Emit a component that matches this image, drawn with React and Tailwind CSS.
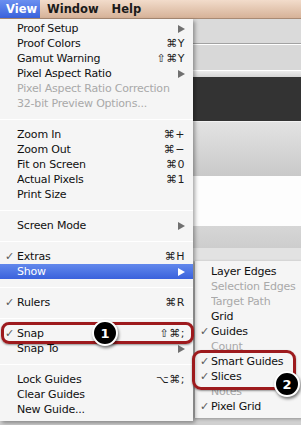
import React from 'react';

const viewItems = [
  { label: 'Proof Setup', arrow: true },
  { label: 'Proof Colors', keys: '⌘Y' },
  { label: 'Gamut Warning', keys: '⇧⌘Y' },
  { label: 'Pixel Aspect Ratio', arrow: true },
  { label: 'Pixel Aspect Ratio Correction', disabled: true },
  { label: '32-bit Preview Options...', disabled: true },
  'sep',
  { label: 'Zoom In', keys: '⌘+' },
  { label: 'Zoom Out', keys: '⌘−' },
  { label: 'Fit on Screen', keys: '⌘0' },
  { label: 'Actual Pixels', keys: '⌘1' },
  { label: 'Print Size' },
  'sep',
  { label: 'Screen Mode', arrow: true },
  'sep',
  { label: 'Extras', check: true, keys: '⌘H' },
  { label: 'Show', arrow: true, active: true },
  'sep',
  { label: 'Rulers', check: true, keys: '⌘R' },
  'sep',
  { label: 'Snap', check: true, keys: '⇧⌘;' },
  { label: 'Snap To', arrow: true },
  'sep',
  { label: 'Lock Guides', keys: '⌥⌘;' },
  { label: 'Clear Guides' },
  { label: 'New Guide...' },
];

const showItems = [
  { label: 'Layer Edges' },
  { label: 'Selection Edges', disabled: true },
  { label: 'Target Path', disabled: true },
  { label: 'Grid' },
  { label: 'Guides', check: true },
  { label: 'Count', disabled: true },
  { label: 'Smart Guides', check: true },
  { label: 'Slices', check: true },
  { label: 'Notes', disabled: true },
  { label: 'Pixel Grid', check: true },
];

const Arrow = ({ white }) => (
  <svg width="7" height="8" viewBox="0 0 7 8" className="shrink-0">
    <path d="M0 0 L7 4 L0 8 Z" fill={white ? '#ffffff' : '#707070'} />
  </svg>
);

const MenuRow = ({ item, checkW = 'w-[17px]' }) => {
  if (item === 'sep') {
    return (
      <div className="h-[16px] flex items-center">
        <div className="w-full h-px bg-[#dcdcdc] border-b border-white" />
      </div>
    );
  }
  const text = item.active
    ? 'text-white'
    : item.disabled
    ? 'text-[#a9a9a9]'
    : 'text-[#101010]';
  return (
    <div
      className={`h-[15px] flex items-center pr-[8px] ${
        item.active ? 'bg-gradient-to-b from-[#6288ec] to-[#3a61dc]' : ''
      }`}
    >
      <div className={`${checkW} shrink-0 pl-[5px] text-[11px] leading-none text-[#5a5a5a]`}>
        {item.check ? '✓' : ''}
      </div>
      <div className={`flex-1 whitespace-nowrap overflow-hidden tracking-[-0.2px] ${text}`}>
        {item.label}
      </div>
      {item.keys && <div className="text-[#1e1e1e] whitespace-nowrap tracking-[0.5px]">{item.keys}</div>}
      {item.arrow && <Arrow white={item.active} />}
    </div>
  );
};

export default function App() {
  return (
    <div
      className="relative w-[301px] h-[425px] overflow-hidden bg-[#d0d0d0] text-[11px] leading-[15px]"
      style={{ fontFamily: '"DejaVu Sans", "Liberation Sans", sans-serif' }}
    >
      {/* menu bar */}
      <div className="h-[19px] flex items-stretch bg-gradient-to-b from-[#f2dccb] to-[#d6b298] border-b border-[#a88a74] font-bold text-[11.5px] text-[#1a1a1a]">
        <div className="w-[40px] flex items-center pl-[6px] text-white bg-gradient-to-b from-[#6a8ff0] to-[#3b62dc]">
          View
        </div>
        <div className="flex items-center pl-[7px]">Window</div>
        <div className="flex items-center pl-[13px]">Help</div>
      </div>

      <div className="flex items-start">
        {/* View menu */}
        <div className="w-[193px] shrink-0 bg-[#f5f5f5] pt-[2px] pb-[4px] shadow-[2px_2px_4px_rgba(0,0,0,0.35)] z-10">
          {viewItems.map((item, i) => (
            <MenuRow key={i} item={item} />
          ))}
        </div>

        {/* window behind */}
        <div className="flex-1 flex flex-col">
          <div className="h-[25px] bg-[#dadada] border-b border-[#a2a2a2]" />
          <div className="h-[27px] bg-[#d8d8d8] border-t border-white border-b border-[#9c9c9c]" />
          <div className="h-[6px] bg-gradient-to-b from-[#ececec] to-[#d4d4d4]" />
          <div className="h-[44px] bg-[#333333]" />
          <div className="h-[55px] bg-gradient-to-b from-[#e3e3e3] to-[#c9c9c9] border-t border-[#f2f2f2]" />
          <div className="h-[50px] bg-[#fdfdfd]" />
          <div className="h-[22px] bg-gradient-to-b from-[#d6d6d6] to-[#cdcdcd]" />
          <div className="h-[13px] bg-[#e2e2e2]" />
          {/* Show submenu */}
          <div className="ml-[2px] bg-[#f5f5f5] pt-[3px] pb-[4px] shadow-[-1px_1px_3px_rgba(0,0,0,0.3)]">
            {showItems.map((item, i) => (
              <MenuRow key={i} item={item} checkW="w-[16px]" />
            ))}
          </div>
        </div>
      </div>

      {/* annotations */}
      <div className="absolute z-20 left-[1px] top-[322px] w-[193px] h-[22px] border-[3px] border-[#9d1a1d] rounded-[8px] shadow-[0_1px_2px_rgba(0,0,0,0.4)]" />
      <div className="absolute z-20 left-[92px] top-[320px] w-[26px] h-[26px] rounded-full bg-black border-2 border-white shadow-[1px_2px_3px_rgba(0,0,0,0.5)] flex items-center justify-center text-white font-bold text-[13px]">
        1
      </div>
      <div className="absolute z-20 left-[192px] top-[350px] w-[104px] h-[40px] border-[3px] border-[#9d1a1d] rounded-[9px] shadow-[0_1px_2px_rgba(0,0,0,0.4)]" />
      <div className="absolute z-20 left-[274px] top-[371px] w-[26px] h-[26px] rounded-full bg-black border-2 border-white shadow-[1px_2px_3px_rgba(0,0,0,0.5)] flex items-center justify-center text-white font-bold text-[13px]">
        2
      </div>
    </div>
  );
}
